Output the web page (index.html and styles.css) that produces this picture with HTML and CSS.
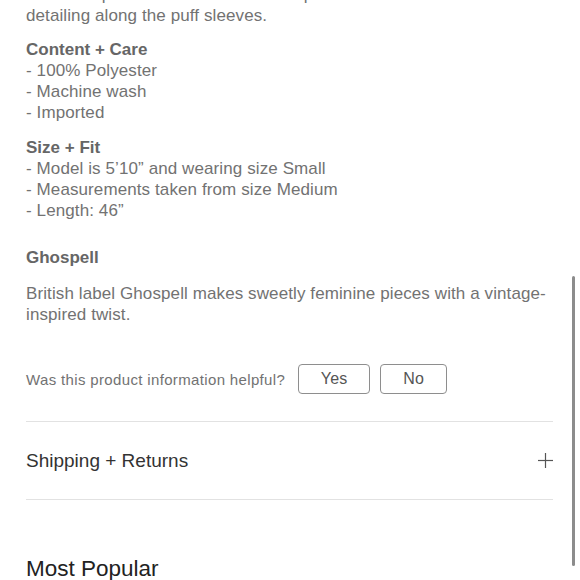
FILE: index.html
```html
<!DOCTYPE html>
<html lang="en">
<head>
<meta charset="utf-8">
<title>Product details</title>
<link rel="stylesheet" href="styles.css">
</head>
<body>
<main class="page">
  <p class="intro">Lace trim panels and shirred bodice pleats and delicate lace<br>detailing along the puff sleeves.</p>

  <section class="spec">
    <h3 class="spec-title">Content + Care</h3>
    <ul class="spec-list">
      <li>- 100% Polyester</li>
      <li>- Machine wash</li>
      <li>- Imported</li>
    </ul>
  </section>

  <section class="spec spec-second">
    <h3 class="spec-title">Size + Fit</h3>
    <ul class="spec-list">
      <li>- Model is 5’10” and wearing size Small</li>
      <li>- Measurements taken from size Medium</li>
      <li>- Length: 46”</li>
    </ul>
  </section>

  <section class="brand">
    <h3 class="spec-title">Ghospell</h3>
    <p class="brand-text">British label Ghospell makes sweetly feminine pieces with a vintage-inspired twist.</p>
  </section>

  <div class="helpful">
    <span class="helpful-q">Was this product information helpful?</span>
    <button class="btn btn-yes" type="button">Yes</button>
    <button class="btn btn-no" type="button">No</button>
  </div>

  <div class="accordion">
    <span class="accordion-title">Shipping + Returns</span>
    <svg class="plus" width="15" height="15" viewBox="0 0 15 15" aria-hidden="true">
      <line x1="7.5" y1="0" x2="7.5" y2="15" stroke="#555" stroke-width="1.2"/>
      <line x1="0" y1="7.5" x2="15" y2="7.5" stroke="#555" stroke-width="1.2"/>
    </svg>
  </div>

  <h2 class="popular">Most Popular</h2>
</main>
<div class="scroll-indicator"></div>
</body>
</html>
```
FILE: styles.css
```css
html, body {
  margin: 0;
  padding: 0;
  background: #ffffff;
  overflow: hidden;
}

body {
  font-family: "Liberation Sans", Arial, Helvetica, sans-serif;
  font-size: 17px;
  line-height: 21px;
  color: #727272;
  letter-spacing: 0.1px;
}

.page {
  padding: 0 27px 0 26px;
}

.intro {
  margin: -16px 0 0;
}

.spec {
  margin-top: 13px;
}

.spec-second {
  margin-top: 14px;
}

.spec-title {
  margin: 0;
  font-size: 17px;
  line-height: 21px;
  font-weight: bold;
  color: #666666;
  letter-spacing: 0;
}

.spec-list {
  list-style: none;
  margin: 0;
  padding: 0;
}

.brand {
  margin-top: 26px;
}

.brand-text {
  margin: 15px 0 0;
}

.helpful {
  display: flex;
  align-items: center;
  margin-top: 39px;
  height: 30px;
}

.helpful-q {
  font-size: 15px;
  letter-spacing: 0.35px;
}

.btn {
  font-family: "Liberation Sans", Arial, Helvetica, sans-serif;
  font-size: 16px;
  color: #555555;
  background: #ffffff;
  border: 1px solid #8e8e8e;
  border-radius: 4px;
  height: 30px;
  padding: 0;
  letter-spacing: 0.2px;
}

.btn-yes {
  width: 72px;
  margin-left: 13px;
}

.btn-no {
  width: 67px;
  margin-left: 10px;
}

.accordion {
  display: flex;
  align-items: center;
  justify-content: space-between;
  margin-top: 27px;
  height: 77px;
  border-top: 1px solid #e2e2e2;
  border-bottom: 1px solid #e2e2e2;
}

.accordion-title {
  font-size: 19px;
  line-height: 24px;
  color: #333333;
  letter-spacing: 0;
}

.plus {
  display: block;
}

.popular {
  margin: 56px 0 0;
  font-size: 22.5px;
  line-height: 26px;
  font-weight: normal;
  color: #222222;
  letter-spacing: 0;
}

.scroll-indicator {
  position: fixed;
  right: 5px;
  top: 276px;
  width: 3px;
  height: 290px;
  border-radius: 2px;
  background: #8c8c8c;
}
```
